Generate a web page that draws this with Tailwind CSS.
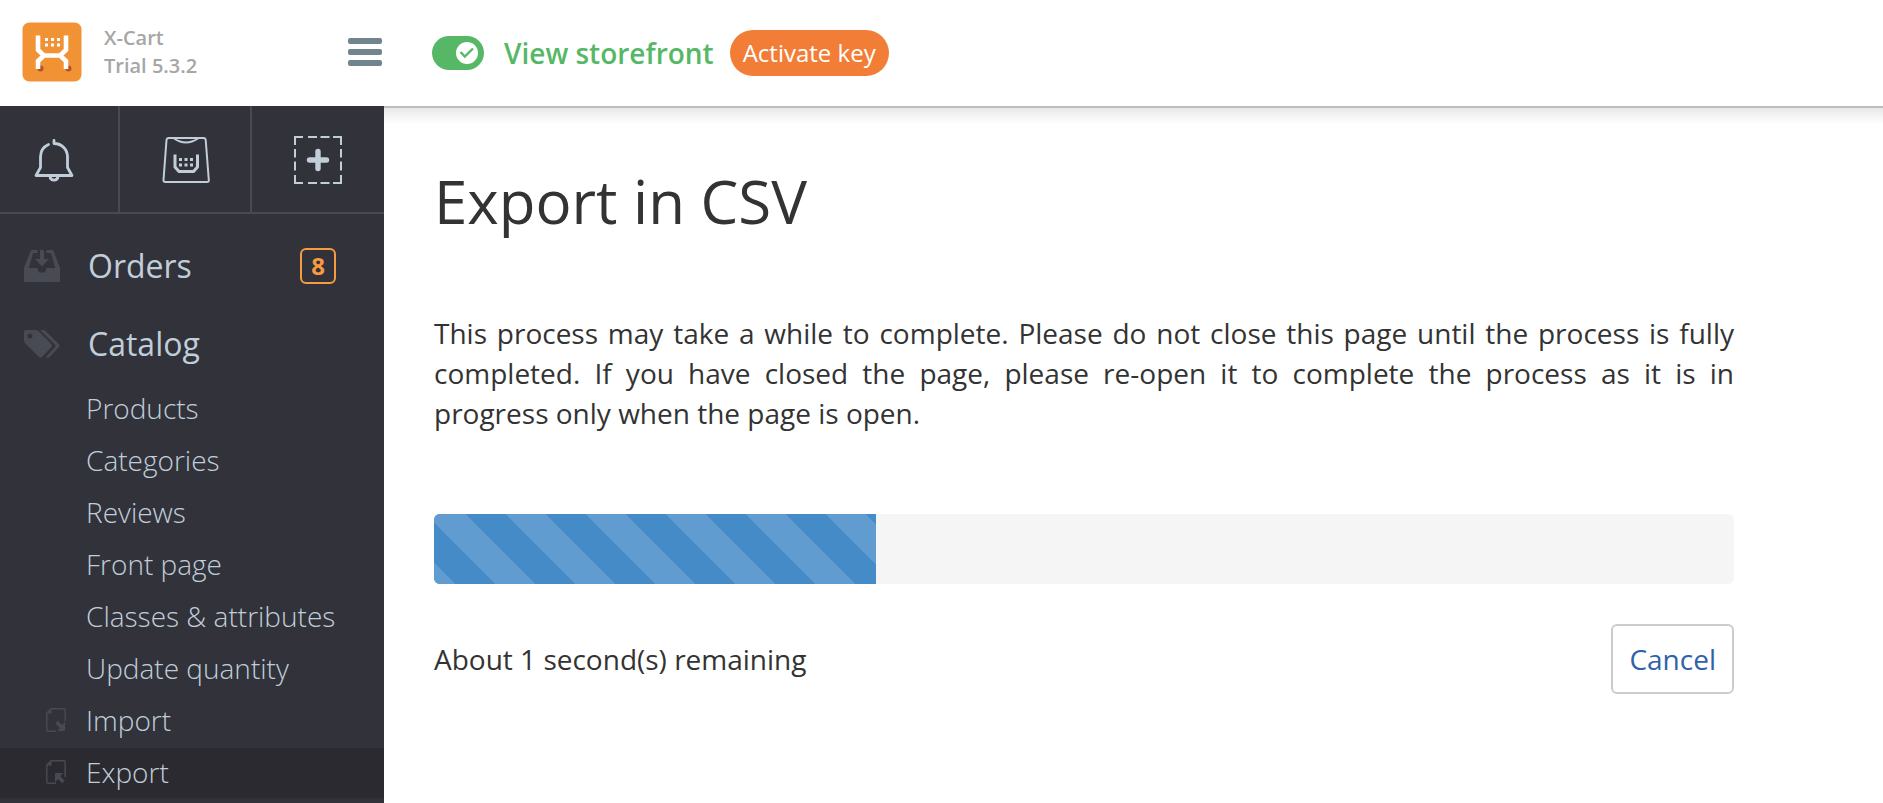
<!DOCTYPE html>
<html lang="en">
<head>
<meta charset="utf-8">
<meta name="viewport" content="width=device-width, initial-scale=1">
<title>Export in CSV</title>
<script src="https://cdn.jsdelivr.net/npm/@tailwindcss/browser@4"></script>
</head>
<body class="flex min-h-screen flex-col bg-white font-['Open_Sans','Noto_Sans',sans-serif] text-[28px] leading-10 text-[#333333]">
<header class="flex h-[106px] shrink-0 items-center">
  <div class="flex w-96 shrink-0 items-center pb-0.5 pl-[22px]">
    <svg class="size-15 shrink-0" viewBox="0 0 60 60" role="img" aria-label="X-Cart">
      <rect x="0.5" y="0.5" width="59" height="59" rx="7" fill="#f19234"/>
      <circle cx="18.500" cy="46.500" r="3" fill="#bb4f27"/><circle cx="46.500" cy="46.500" r="3" fill="#bb4f27"/>
      <path d="M16 13.500V28l6 5.500h16l6-5.500V13.500M16 47V39l6-5.500M44 47V39l-6-5.500" fill="none" stroke="#fff" stroke-width="4.600"/>
      <path d="M23 16h3v3h-3zM29 16h3v3h-3zM35 16h3v3h-3zM23 21.500h3v3h-3zM29 21.500h3v3h-3zM35 21.500h3v3h-3z" fill="#fff"/>
    </svg>
    <p class="ml-[22px] text-[20px] leading-7 font-semibold text-[#a6a6a6]">X-Cart<br>Trial 5.3.2</p>
    <button type="button" aria-label="Toggle menu" class="mr-0.5 ml-auto flex w-[34px] flex-col gap-[5px]">
      <span class="h-1.5 w-full rounded-xs bg-[#71858f]"></span>
      <span class="h-1.5 w-full rounded-xs bg-[#71858f]"></span>
      <span class="h-1.5 w-full rounded-xs bg-[#71858f]"></span>
    </button>
  </div>
  <div class="flex items-center pl-12">
    <label class="flex cursor-pointer">
      <input type="checkbox" checked class="peer sr-only" aria-label="Storefront enabled">
      <svg class="h-[34px] w-13" viewBox="0 0 52 34" aria-hidden="true">
        <rect width="52" height="34" rx="17" fill="#56b866"/>
        <circle cx="35" cy="17" r="11" fill="#fff"/>
        <path d="M28.500 16l4.300 4.500 8.200-8" fill="none" stroke="#56b866" stroke-width="2.400"/>
      </svg>
    </label>
    <a href="#" class="ml-5 text-[28px] font-semibold text-[#56b866]">View storefront</a>
    <button type="button" class="ml-4 h-[46px] rounded-full bg-[#f27d37] px-[13px] text-[24px] leading-8 font-medium text-white">Activate key</button>
  </div>
</header>
<div class="flex grow">
  <aside class="flex w-96 shrink-0 flex-col bg-[#32323b] text-[#c0ceda]">
    <div class="flex h-[108px] border-b-2 border-[#494952]">
      <button type="button" aria-label="Notifications" class="flex w-30 items-center justify-center border-r-2 border-[#494952] pt-0.5 pr-2.5">
        <svg class="h-12 w-10" viewBox="34 136 40 48" fill="none" stroke="currentColor" stroke-width="2.800" stroke-linecap="round" stroke-linejoin="round"><path d="M54 140.500V143.500C62 143.500 67.500 149.500 67.500 157V167.500L72 175.500H36L40.500 167.500V157C40.500 151 44 146.500 48.500 144.500"/><path d="M50 176.500C50.500 181.200 57.500 181.200 58 176.500"/></svg>
      </button>
      <button type="button" aria-label="Orders bag" class="flex w-33 items-center justify-center border-r-2 border-[#494952] pt-0.5 pl-0.5">
        <svg class="size-12" viewBox="162 136 48 48" fill="none" stroke="currentColor" stroke-linejoin="round"><path d="M169 138H203.500Q205.500 138 205.700 140L208.800 180Q209 182 207 182H165.500Q163.300 182 163.500 180L166.500 140Q166.700 138 169 138Z" stroke-width="2"/><path d="M174 138.500Q186 146.500 198 138.500" stroke-width="1.800"/><path d="M175 154.500V167L179 171.500H193.500L197.500 167V154.500" stroke-width="3"/><path d="M179 158h3v3h-3zM184.500 158h3v3h-3zM190 158h3v3h-3zM179 163.500h3v3h-3zM184.500 163.500h3v3h-3zM190 163.500h3v3h-3z" fill="currentColor" stroke="none"/></svg>
      </button>
      <button type="button" aria-label="Add new" class="flex w-33 items-center justify-center pt-0.5">
        <svg class="size-12" viewBox="0 0 48 48" fill="none" stroke="currentColor" stroke-width="2"><path d="M9 1H1V9M14 1h9M26.500 1h9M39 1h8V9M47 13v8.500M47 25.500v9M47 39v8H39M35.500 47h-9M23 47h-9M9 47H1V39M1 34.500v-9M1 21.500V13"/><path d="M24 15.500v17M15.500 24h17" stroke-width="5.400" stroke-linecap="round"/></svg>
      </button>
    </div>
    <nav aria-label="Main menu" class="pt-3.5">
      <a href="#" class="flex h-[78px] items-center pr-12 pb-0.5 pl-6 text-[32px]">
        <svg class="h-8 w-9" viewBox="0 0 36 32" fill="#484b54"><path d="M7 0H13.500V3H9L4.800 18H13.500L15 22.500H21L22.500 18H31.200L27 3H22.500V0H29L36 18V32H0V18Z"/><path d="M16 0H20V9H25L18 16.500 11 9H16Z"/></svg>
        <span class="ml-7">Orders</span>
        <span class="ml-auto flex size-9 items-center justify-center rounded-md border-2 border-[#f79a42] text-[24px] font-bold text-[#f79a42]">8</span>
      </a>
      <a href="#" class="flex h-[78px] items-center pb-0.5 pl-6 text-[32px]">
        <svg class="h-7 w-9" viewBox="0 0 36 28" fill="#484b54"><path fill-rule="evenodd" d="M2 0H12Q13.500 0 15 1.500L27.500 14Q28.700 15.500 27.500 17L18 27Q16.500 28.500 15 27L1.500 13.500Q0 12 0 10V2Q0 0 2 0ZM6 3.500A2.500 2.500 0 1 0 6 8.500 2.500 2.500 0 0 0 6 3.500Z"/><path d="M16 0H19Q20.500 0 22 1.500L35 14.200Q36.300 15.500 35 17L25.500 27Q23.500 28.800 22 26.800L31 17.200Q32 16 31 14.800Z"/></svg>
        <span class="ml-7">Catalog</span>
      </a>
      <ul class="flex flex-col gap-0.5 text-[28px] font-light">
        <li><a href="#" class="flex h-[50px] items-center pb-0.5 pl-[86px]">Products</a></li>
        <li><a href="#" class="flex h-[50px] items-center pb-0.5 pl-[86px]">Categories</a></li>
        <li><a href="#" class="flex h-[50px] items-center pb-0.5 pl-[86px]">Reviews</a></li>
        <li><a href="#" class="flex h-[50px] items-center pb-0.5 pl-[86px]">Front page</a></li>
        <li><a href="#" class="flex h-[50px] items-center pb-0.5 pl-[86px]">Classes &amp; attributes</a></li>
        <li><a href="#" class="flex h-[50px] items-center pb-0.5 pl-[86px]">Update quantity</a></li>
        <li><a href="#" class="flex h-[50px] items-center gap-5 pb-0.5 pl-[46px]">
          <svg class="h-6 w-5" viewBox="0 0 20 24" fill="none" stroke="#474a53"><path d="M10 23.200H2.500Q.8 23.200 .8 21.500V5L5 .8H17.500Q19.200 .8 19.200 2.500V13" stroke-width="1.500"/><path d="M1 5.500H5.500V1Z" fill="#474a53" stroke="none"/><path d="M10.500 14L16 19.500" stroke-width="3.500"/><path d="M19 13.500V23H11.500Z" fill="#474a53" stroke="none"/></svg>Import</a></li>
        <li><a href="#" aria-current="page" class="flex h-[50px] items-center gap-5 bg-[#2b2a30] pb-0.5 pl-[46px]">
          <svg class="h-6 w-5" viewBox="0 0 20 24" fill="none" stroke="#474a53"><path d="M10 23.200H2.500Q.8 23.200 .8 21.500V5L5 .8H17.500Q19.200 .8 19.200 2.500V17" stroke-width="1.500"/><path d="M1 5.500H5.500V1Z" fill="#474a53" stroke="none"/><path d="M17.500 22L11.500 16" stroke-width="3.500"/><path d="M9 22.500V13H17Z" fill="#474a53" stroke="none"/></svg>Export</a></li>
      </ul>
    </nav>
  </aside>
  <main class="min-w-0 grow border-t-2 border-[#bdbdbd]">
    <div class="h-4 bg-linear-to-b from-[#e8e8e8] to-white"></div>
    <div class="max-w-[1350px] pl-[50px]">
      <h1 class="pt-[38px] text-[60px] leading-[78px]">Export in CSV</h1>
      <p class="mt-[73px] text-justify">This process may take a while to complete. Please do not close this page until the process is fully completed. If you have closed the page, please re-open it to complete the process as it is in progress only when the page is open.</p>
      <div role="progressbar" aria-label="Export progress" aria-valuenow="34" aria-valuemin="0" aria-valuemax="100" class="mt-[81px] h-[70px] overflow-hidden rounded-md bg-[#f5f5f5]">
        <div class="h-full bg-[#458bc8] bg-[linear-gradient(45deg,#619cd1_25%,transparent_25%,transparent_50%,#619cd1_50%,#619cd1_75%,transparent_75%)] bg-size-[80px_80px] bg-position-[-8px_0px]" style="width:34%"></div>
      </div>
      <div class="mt-10 flex items-center justify-between">
        <p>About 1 second(s) remaining</p>
        <button type="button" class="h-[70px] rounded-md border-2 border-[#cccccc] px-4 text-[#2f62a9]">Cancel</button>
      </div>
    </div>
  </main>
</div>
</body>
</html>
